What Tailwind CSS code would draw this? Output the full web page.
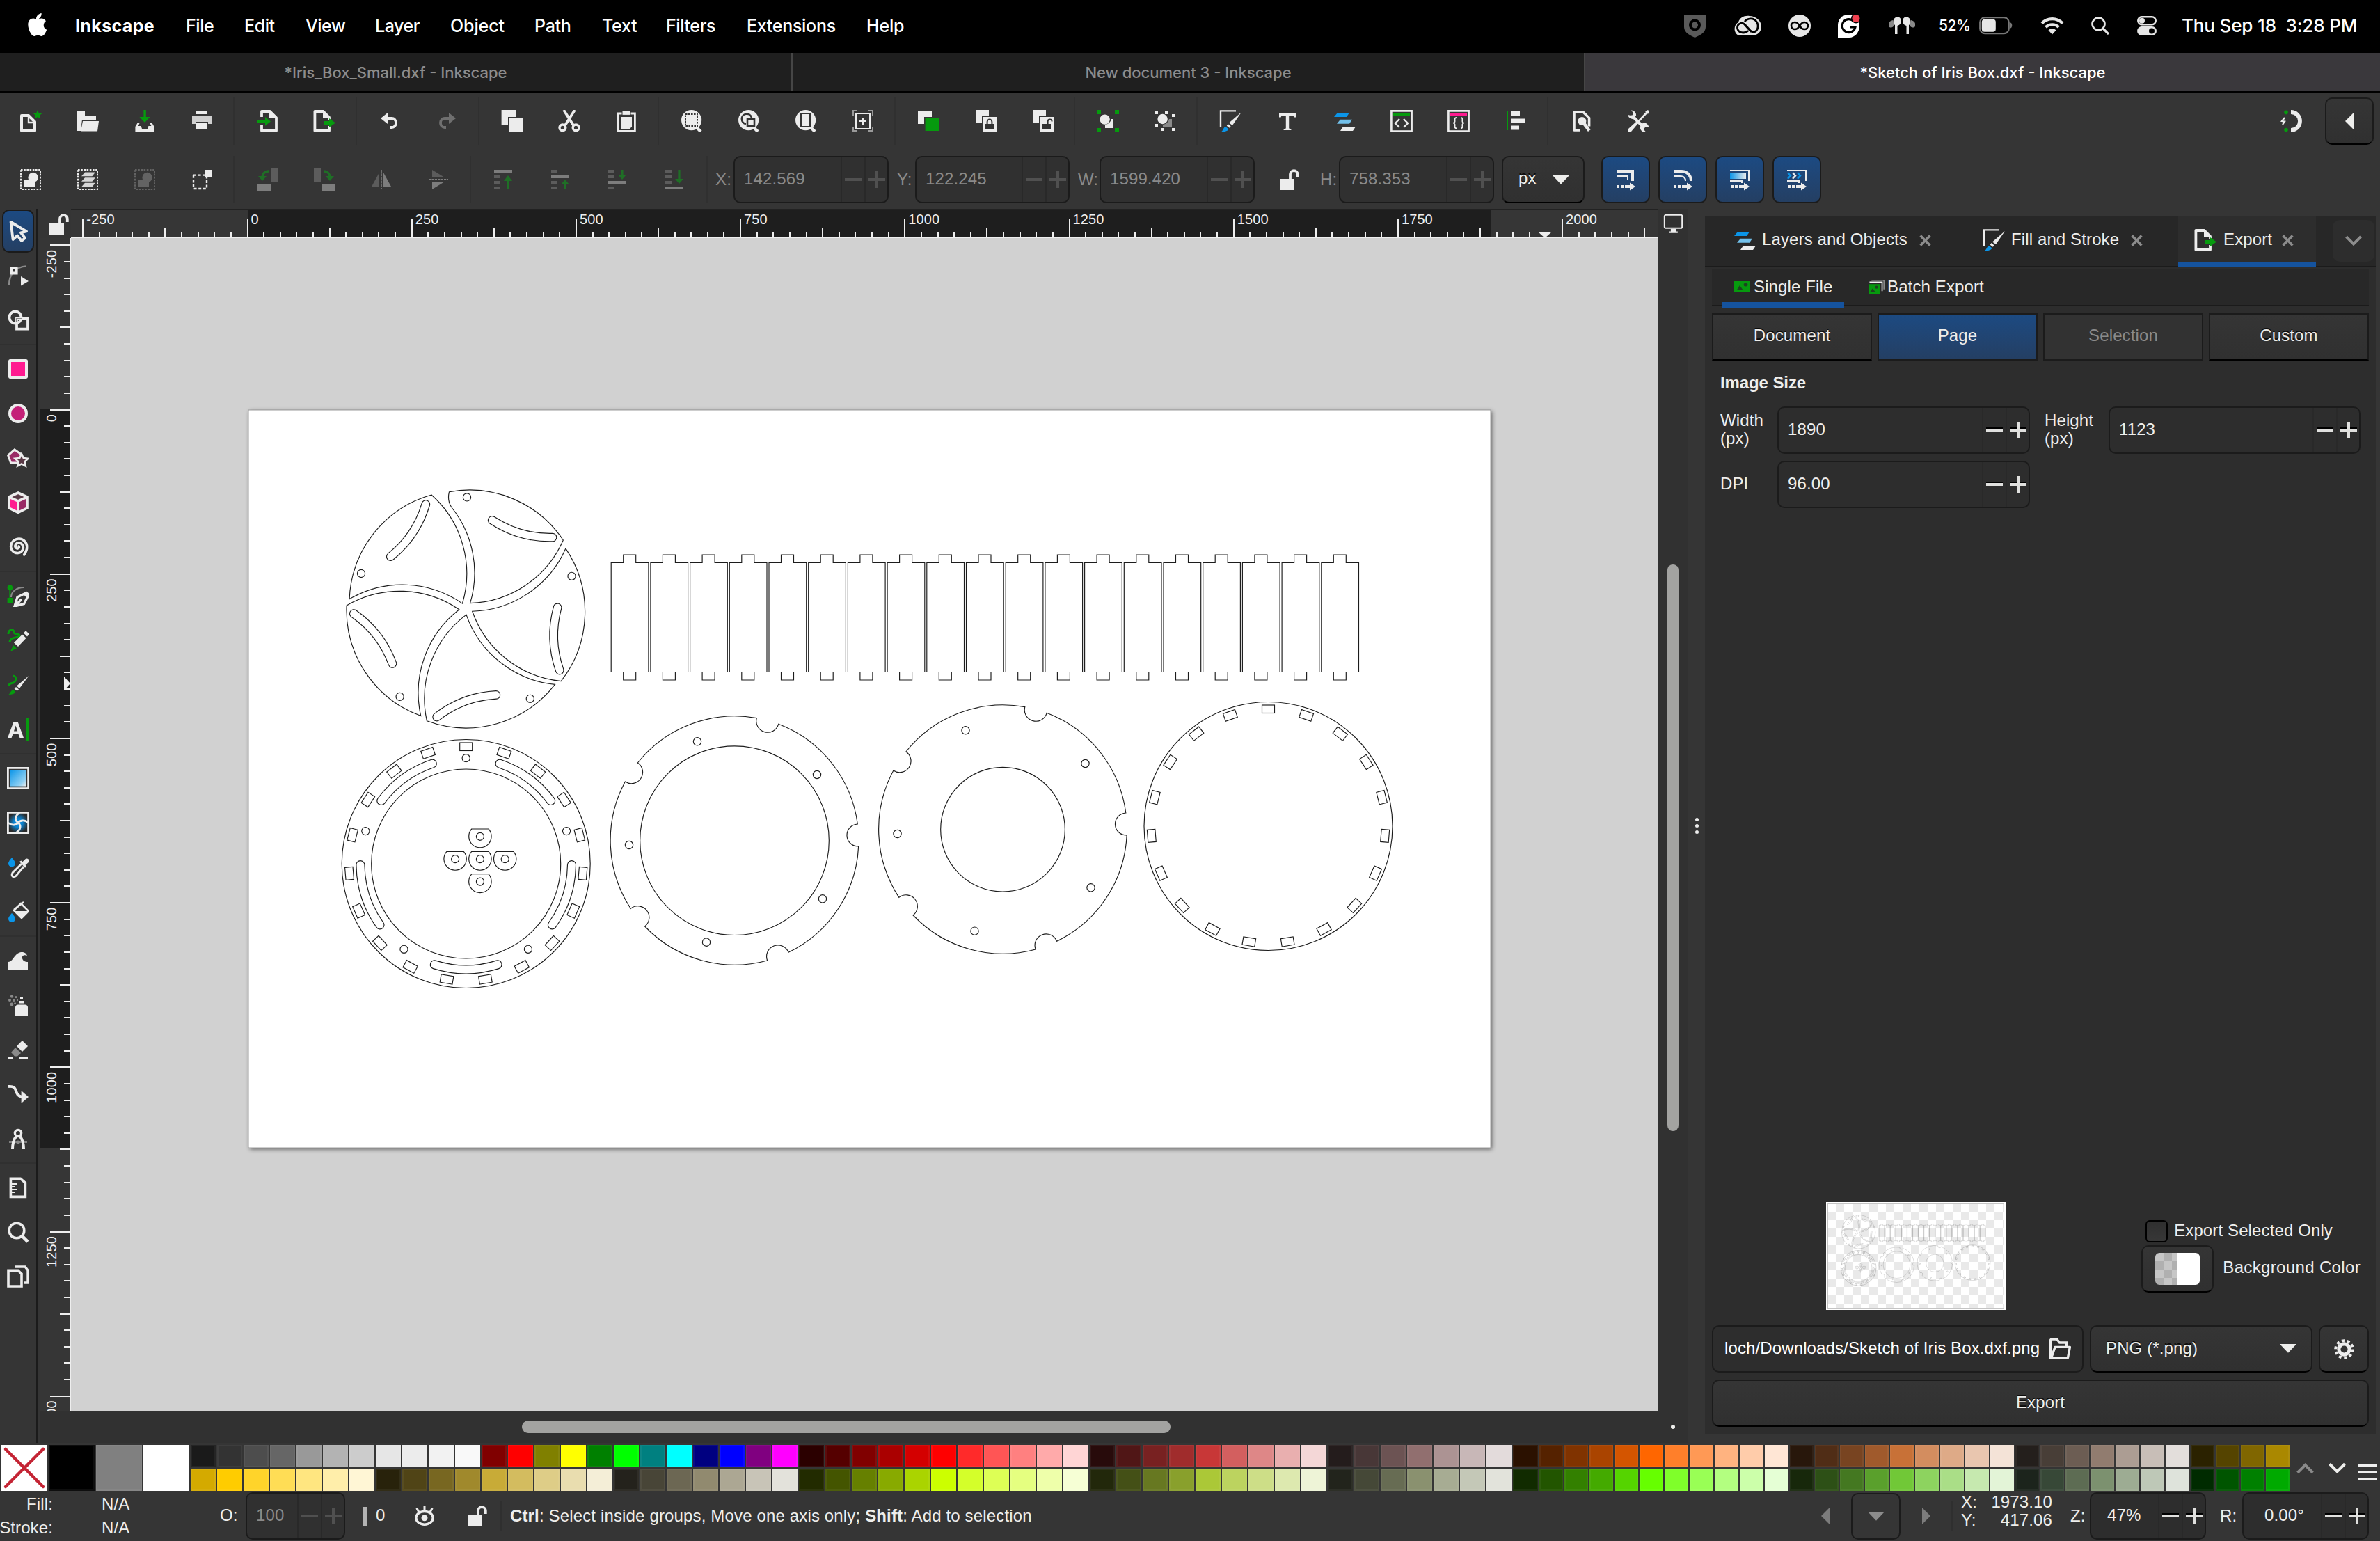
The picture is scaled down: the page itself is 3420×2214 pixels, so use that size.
<!DOCTYPE html>
<html lang="en">
<head>
<meta charset="utf-8">
<title>*Sketch of Iris Box.dxf - Inkscape</title>
<script src="https://cdn.jsdelivr.net/npm/@tailwindcss/browser@4"></script>
</head>
<body class="relative w-[3420px] h-[2214px] overflow-hidden bg-[#353535] text-[#eeeeec] text-[24px] leading-[28px] tracking-[0.12px] font-['Liberation_Sans',Arial,sans-serif] flex flex-col">

<!-- icon sprite -->
<svg class="absolute size-0" xmlns="http://www.w3.org/2000/svg">
 <defs>
  <linearGradient id="gBlue" x1="0" y1="0" x2="1" y2="1"><stop offset="0" stop-color="#0b95e8"/><stop offset=".75" stop-color="#8fd0f3"/><stop offset="1" stop-color="#ececec"/></linearGradient>
  <linearGradient id="gBlueH" x1="0" x2="1"><stop offset="0" stop-color="#0b95e8"/><stop offset="1" stop-color="#ececec"/></linearGradient>
  <radialGradient id="gMesh"><stop offset="0" stop-color="#0b95e8"/><stop offset=".45" stop-color="#0b80cc"/><stop offset="1" stop-color="#2a2a2a"/></radialGradient>
 </defs>
 <symbol id="new" viewBox="0 0 16 16"><path d="M1.500 4h5L11 8.500V15H1.500z" fill="none" stroke="#ececec" stroke-width="2" stroke-linejoin="round"/><path d="M6.500 4.500V9H11" fill="none" stroke="#ececec" stroke-width="1.200"/><path d="M13 0l.9 2.200 2.300.2-1.700 1.500.5 2.300-2-1.200-2 1.200.5-2.300L9.800 2.400l2.300-.2z" fill="#069a0e"/></symbol>
 <symbol id="open" viewBox="0 0 16 16"><path d="M.5 1h5.500v3H14v3H4L3 15H.500z" fill="#ececec"/><path d="M4.500 8H16l-1 7.300H3z" fill="#ececec"/></symbol>
 <symbol id="save" viewBox="0 0 16 16"><path d="M7.200 0h1.700v5H11.800L8 9 4.200 5h3z" fill="#069a0e"/><path d="M3 9L1.200 12v4h13.600v-4L13 9h-1.500l1.200 2.500h-2L10 13.500H6l-.7-2h-2L4.500 9z" fill="#ececec"/></symbol>
 <symbol id="print" viewBox="0 0 16 16"><path d="M4 1h8v2H4z" fill="#ececec"/><path d="M1 4.200h14V10h-2.500V8.500h-9V10H1z" fill="#cfcfcf"/><path d="M4 9.300h8V14H4z" fill="#ececec"/></symbol>
 <symbol id="import" viewBox="0 0 16 16"><path d="M4 5V1h6l4.500 4.500V15H4v-4" fill="none" stroke="#ececec" stroke-width="1.900" stroke-linejoin="round"/><path d="M9.500.5v5.500h5z" fill="#ececec"/><path d="M1 7h5.500V5l4 3.200-4 3.200v-2H1z" fill="#069a0e"/></symbol>
 <symbol id="export" viewBox="0 0 16 16"><path d="M11.500 11.500V15H1.200V1h6l4.300 4.300v1.700" fill="none" stroke="#ececec" stroke-width="1.900" stroke-linejoin="round"/><path d="M7 .5v5.500h5z" fill="#ececec"/><path d="M7.500 8H11.500V6l4.500 3.200-4.500 3.300v-2H7.500z" fill="#069a0e"/></symbol>
 <symbol id="undo" viewBox="0 0 16 16"><path d="M3 6h6.500a3 3 0 0 1 3 3v.5a3 3 0 0 1-3 3H8.500" fill="none" stroke="#ececec" stroke-width="1.900"/><path d="M6.500 2v8L1.500 6z" fill="#ececec"/></symbol>
 <symbol id="redo" viewBox="0 0 16 16"><path d="M13 6H6.500a3 3 0 0 0-3 3v.5a3 3 0 0 0 3 3h1" fill="none" stroke="#6f6f6f" stroke-width="1.900"/><path d="M9.500 2v8l5-4z" fill="#6f6f6f"/></symbol>
 <symbol id="copy" viewBox="0 0 16 16"><path d="M.3 0h10.500v5H5v6H.300z" fill="#ececec"/><path d="M6 6h10v10H6z" fill="#ececec"/></symbol>
 <symbol id="cut" viewBox="0 0 16 16"><path d="M4 0l7 11M12 0L5 11" stroke="#ececec" stroke-width="1.900"/><circle cx="3.200" cy="12.700" r="2.200" fill="none" stroke="#ececec" stroke-width="1.700"/><circle cx="12.800" cy="12.700" r="2.200" fill="none" stroke="#ececec" stroke-width="1.700"/></symbol>
 <symbol id="paste" viewBox="0 0 16 16"><path d="M1.800 2.500h12.400v12.700H1.800z" fill="none" stroke="#ececec" stroke-width="1.400"/><path d="M5 .7h6v3H5z" fill="#ececec" stroke="#353535" stroke-width=".5"/><path d="M4 5h8v7l-2 2H4z" fill="#ececec"/></symbol>
 <symbol id="zoomsel" viewBox="0 0 16 16"><circle cx="7.800" cy="7.300" r="7.300" fill="#ececec"/><path d="M11.500 12.500l3 3" stroke="#ececec" stroke-width="2.200"/><path d="M3.500 3h8.500v8.500H3.500z" fill="none" stroke="#333" stroke-dasharray="1.300 .7"/></symbol>
 <symbol id="zoomdraw" viewBox="0 0 16 16"><circle cx="7.800" cy="7.300" r="7.300" fill="#ececec"/><path d="M11.500 12.500l3 3" stroke="#ececec" stroke-width="2.200"/><path d="M6 10a3.600 3.600 0 1 1 4-4.500M7 6.500h5v5H7z" fill="none" stroke="#333" stroke-width="1.300"/></symbol>
 <symbol id="zoompage" viewBox="0 0 16 16"><circle cx="7.800" cy="7.300" r="7.300" fill="#ececec"/><path d="M11.500 12.500l3 3" stroke="#ececec" stroke-width="2.200"/><path d="M4.500 2.500h6.500v9.500H4.500z" fill="none" stroke="#333" stroke-width="1.100"/></symbol>
 <symbol id="zoomcenter" viewBox="0 0 16 16"><path d="M1 4V.5h3M12 .5h3V4M15 12v3h-3M4 15H1v-3" fill="none" stroke="#9a9a9a"/><path d="M3 2.500h10v11H3z" fill="none" stroke="#ececec"/><path d="M8 5.500v5M5.500 8h5" stroke="#ececec"/></symbol>
 <symbol id="dup" viewBox="0 0 16 16"><path d="M.5 1h10v4H5v5H.500z" fill="#ececec"/><path d="M5.800 6h10v9h-10z" fill="#069a0e"/></symbol>
 <symbol id="clone" viewBox="0 0 16 16"><path d="M1 0h9.500v4H5.500v5H1z" fill="#ececec"/><path d="M6 5h10v11H6z" fill="#ececec"/><path d="M8 10h6v4H8z" fill="#333"/><path d="M9.300 10V8.500a1.700 1.700 0 0 1 3.400 0V10" fill="none" stroke="#333"/></symbol>
 <symbol id="unclone" viewBox="0 0 16 16"><path d="M1 0h9.500v4H5.500v5H1z" fill="#ececec"/><path d="M6 5h10v11H6z" fill="#ececec"/><path d="M8 10h6v4H8z" fill="#333"/><path d="M11.800 10V8.200a1.500 1.500 0 0 1 3 0" fill="none" stroke="#333"/></symbol>
 <symbol id="group" viewBox="0 0 16 16"><path d="M0 0h3v3H0zM13 0h3v3h-3zM0 13h3v3H0zM13 13h3v3h-3z" fill="#069a0e"/><path d="M12 6.500V13H6v-2.500A5 5 0 0 0 10.500 6.500z" fill="#ececec"/><circle cx="5.800" cy="6.800" r="3.600" fill="#ececec"/></symbol>
 <symbol id="ungroup" viewBox="0 0 16 16"><path d="M1 1h2v2H1zM8 1h2v2H8zM13 3h2v2h-2zM1 10h2v2H1zM5 13h2v2H5zM13 13h2v2h-2z" fill="#ececec"/><path d="M13 6.500V12H6.500V10.500A5 5 0 0 0 11 6.500z" fill="#8a8a8a"/><circle cx="6.300" cy="6.500" r="3.600" fill="#ececec"/></symbol>
 <symbol id="fill" viewBox="0 0 16 16"><path d="M1 12V.7h11" fill="none" stroke="#ececec" stroke-width="1.200"/><path d="M16 1.500L9.500 11 7 9.300z" fill="#ececec"/><path d="M6.300 10l2 1.700-.9 1.200-2-1.500z" fill="#ececec"/><path d="M4.500 12l2.300 1.700C6 15.300 4 15.600 1.500 15.600c1.500-.8 1.300-3 3-3.600z" fill="#0b95e8"/></symbol>
 <symbol id="text" viewBox="0 0 16 16"><path d="M2 2h12v3.300h-1.300L12.200 4H9.100v9.300l1.600.3v.9H5.300v-.9l1.600-.3V4H3.800l-.5 1.300H2z" fill="#ececec"/></symbol>
 <symbol id="layers" viewBox="0 0 16 16"><path d="M3 2h8.500L9.500 5H0.500z" fill="#0b95e8"/><path d="M5 6.900h8.500l-2 3H2.500z" fill="#72c0ea"/><path d="M7 12h9l-2 3H5z" fill="#ececec"/></symbol>
 <symbol id="xml" viewBox="0 0 16 16"><path d="M.7.700h14.600v14.600H.700z" fill="none" stroke="#ececec" stroke-width="1.300"/><path d="M2 2h12v2H2z" fill="#069a0e"/><path d="M6.500 6.500L3.500 9.500l3 3M9.500 6.500l3 3-3 3" fill="none" stroke="#ececec" stroke-width="1.200"/></symbol>
 <symbol id="css" viewBox="0 0 16 16"><path d="M.7.700h14.600v14.600H.700z" fill="none" stroke="#ececec" stroke-width="1.300"/><path d="M2 2h12v2H2z" fill="#ff1a90"/><path d="M6.500 5.500c-2 0-1 2-1.300 3-.2.600-1 .8-1 .8s.8.200 1 .9c.3 1-.7 3 1.300 3M9.500 5.500c2 0 1 2 1.300 3 .2.600 1 .8 1 .8s-.8.200-1 .9c-.3 1 .7 3-1.300 3" fill="none" stroke="#ececec"/></symbol>
 <symbol id="align" viewBox="0 0 16 16"><path d="M1.500 1h1v13.500h-1z" fill="#069a0e"/><path d="M4.500 1h6.500v3H4.500zM4.500 6.200H15V9.200H4.500zM4.500 11.300h6V14.300h-6z" fill="#ececec"/></symbol>
 <symbol id="docprops" viewBox="0 0 16 16"><path d="M7 14.500H3V1.500h6.500l4.300 4.300v6" fill="none" stroke="#ececec" stroke-width="1.800" stroke-linejoin="round"/><circle cx="8.700" cy="8" r="3" fill="#ececec"/><path d="M9.200 8.500l4.700 6.300" stroke="#ececec" stroke-width="2.300"/></symbol>
 <symbol id="prefs" viewBox="0 0 16 16"><path d="M4 4.500l8.500 8.500" stroke="#ececec" stroke-width="2.200"/><path d="M.7 3.500A3.300 3.300 0 0 0 5 6.300L6.500 4A3.300 3.300 0 0 0 3 .3l1.600 2-.8 1.500-1.600.1zM15.600 12a3.300 3.300 0 0 0-4.300-2.600L9.500 12a3.300 3.300 0 0 0 4 3.800l-1.700-2 .8-1.500 1.600-.3z" fill="#ececec"/><path d="M14.500 1.500L7 9.500" stroke="#ececec" stroke-width="1.400"/><path d="M7 8l1.300 1.300L3 15.500.800 15.800 1 13.500z" fill="#ececec"/><path d="M13 1l2-1 1 1-1 2z" fill="#ececec"/></symbol>
 <symbol id="snap" viewBox="0 0 16 16"><path d="M8 1.500a6.500 6.500 0 0 1 0 13" fill="none" stroke="#ececec" stroke-width="2.900"/><path d="M3.500 5.500L1.500 8l2 .3-1.500 2.200" fill="none" stroke="#ececec" stroke-width="1.100"/><circle cx="4.500" cy="1.700" r="1.400" fill="#069a0e"/><circle cx="4.500" cy="14.300" r="1.400" fill="#069a0e"/></symbol>
 <!-- selector bar -->
 <symbol id="selall" viewBox="0 0 16 16"><path d="M1 1h14v14H1z" fill="none" stroke="#ececec" stroke-dasharray="1.300 .8"/><path d="M11 8v5H3.500V8.500h4z" fill="#ececec"/><circle cx="9.800" cy="6.500" r="3.600" fill="#ececec"/></symbol>
 <symbol id="sellayers" viewBox="0 0 16 16"><path d="M1 1h14v14H1z" fill="none" stroke="#ececec" stroke-dasharray="1.300 .8"/><path d="M6 2.800h7.500l-2.300 2.800H3.500zM6 6.600h7.500l-2.300 2.800H3.500zM6 10.400h7.500l-2.300 2.800H3.500z" fill="#d6d6d6"/></symbol>
 <symbol id="desel" viewBox="0 0 16 16"><g opacity=".25"><path d="M1 1h14v14H1z" fill="none" stroke="#ececec" stroke-dasharray="1.300 .8"/><path d="M11 8v5H3.500V8.500h4z" fill="#ececec"/><circle cx="9.800" cy="6.500" r="3.600" fill="#ececec"/></g></symbol>
 <symbol id="seltouch" viewBox="0 0 16 16"><path d="M2 4.800h9.500V14.500H2z" fill="none" stroke="#ececec" stroke-width="1.200" stroke-dasharray="2 1.300"/><path d="M10 1h5v5h-5z" fill="#ececec"/></symbol>
 <symbol id="rotl" viewBox="0 0 16 16"><path d="M11 0h5v10h-5z" fill="#5c5c5c"/><path d="M.5 11h10v5H.500z" fill="#7d7d7d"/><path d="M9 2C6 2 4.500 4 4.500 6.500" fill="none" stroke="#1f6f26" stroke-width="1.700"/><path d="M1.500 5.500h6L4.500 9z" fill="#1f6f26"/></symbol>
 <symbol id="rotr" viewBox="0 0 16 16"><path d="M.5 0h5v10H.500z" fill="#5c5c5c"/><path d="M6 11h10v5H6z" fill="#7d7d7d"/><path d="M7.500 2C10.500 2 12 4 12 6.500" fill="none" stroke="#1f6f26" stroke-width="1.700"/><path d="M9 5.500h6L12 9z" fill="#1f6f26"/></symbol>
 <symbol id="fliph" viewBox="0 0 16 16"><path d="M6.500 3v10H1z" fill="#5c5c5c"/><path d="M9.500 3v10H15z" fill="#7d7d7d"/><path d="M8 1v14" stroke="#7d7d7d" stroke-width=".8" stroke-dasharray="2 .6"/></symbol>
 <symbol id="flipv" viewBox="0 0 16 16"><path d="M3.500 1v5.500h9z" fill="#5c5c5c"/><path d="M3.500 15V9.500h9z" fill="#7d7d7d"/><path d="M1 8h14" stroke="#7d7d7d" stroke-width=".9" stroke-dasharray="1.600 .6"/></symbol>
 <symbol id="top" viewBox="0 0 16 16"><path d="M1 1h13v2H1z" fill="#7d7d7d"/><path d="M1 5h4.500v2H1zM1 9h4.500v2H1zM1 13h4.500v2H1z" fill="#5c5c5c"/><path d="M10.200 15V9H8l3-4 3 4h-2.200v6z" fill="#1f6f26"/></symbol>
 <symbol id="raise" viewBox="0 0 16 16"><path d="M1 5h13v2H1z" fill="#7d7d7d"/><path d="M1 1h4.500v2H1zM1 9h4.500v2H1zM1 13h4.500v2H1z" fill="#5c5c5c"/><path d="M10.200 15v-3.500H8l3-3.500 3 3.500h-2.200V15z" fill="#1f6f26"/></symbol>
 <symbol id="lower" viewBox="0 0 16 16"><path d="M1 9h13v2H1z" fill="#7d7d7d"/><path d="M1 1h4.500v2H1zM1 5h4.500v2H1zM1 13h4.500v2H1z" fill="#5c5c5c"/><path d="M10.200 1v3.500H8L11 8l3-3.500h-2.200V1z" fill="#1f6f26"/></symbol>
 <symbol id="bottom" viewBox="0 0 16 16"><path d="M1 13h13v2H1z" fill="#7d7d7d"/><path d="M1 1h4.500v2H1zM1 5h4.500v2H1zM1 9h4.500v2H1z" fill="#5c5c5c"/><path d="M10.200 1v6.500H8l3 3.500 3-3.500h-2.200V1z" fill="#1f6f26"/></symbol>
 <symbol id="unlock" viewBox="0 0 16 16"><path d="M1.500 7.500H12v8H1.500z" fill="#ececec"/><path d="M9 7.500V4.300a2.700 2.700 0 0 1 5.400 0v2.200" fill="none" stroke="#ececec" stroke-width="1.900"/></symbol>
 <symbol id="scstroke" viewBox="0 0 16 16"><path d="M2 1h12v8h-2V3H2z" fill="#ececec"/><path d="M2 5.500h7.500v3" fill="none" stroke="#ececec"/><path d="M1.500 12h2v2h-2zM4.500 12h2v2h-2zM7.500 12H11v-1.800l4 2.800-4 2.800V14H7.500z" fill="#ececec"/></symbol>
 <symbol id="sccorner" viewBox="0 0 16 16"><path d="M2 1h5c4.500 0 8 3 8 8h-2C13 5.500 10.500 3 7 3H2z" fill="#ececec"/><path d="M2 5.500h4c2.500 0 4 1 4 3.500" fill="none" stroke="#ececec"/><path d="M1.500 12h2v2h-2zM4.500 12h2v2h-2zM7.500 12H11v-1.800l4 2.800-4 2.800V14H7.500z" fill="#ececec"/></symbol>
 <symbol id="scgrad" viewBox="0 0 16 16"><path d="M1 1.500h13.500V9" fill="none" stroke="#ececec"/><path d="M1 3h11.500v4.500H1z" fill="url(#gBlueH)"/><path d="M1 9h8.500v1.500" fill="none" stroke="#ececec"/><path d="M1.500 12h2v2h-2zM4.500 12h2v2h-2zM7.500 12H11v-1.800l4 2.800-4 2.800V14H7.500z" fill="#ececec"/></symbol>
 <symbol id="scpat" viewBox="0 0 16 16"><path d="M1 1.500h13.500V9" fill="none" stroke="#ececec"/><path d="M1.500 3l2 2.200-2 2.200M8.500 3l2 2.200-2 2.200" fill="none" stroke="#0b95e8" stroke-width="1.200"/><path d="M5 3l2 2.200L5 7.400" fill="none" stroke="#ececec" stroke-width="1.200"/><path d="M1 9h8.500v1.500" fill="none" stroke="#ececec"/><path d="M1.500 12h2v2h-2zM4.500 12h2v2h-2zM7.500 12H11v-1.800l4 2.800-4 2.800V14H7.500z" fill="#ececec"/></symbol>
 <!-- toolbox -->
 <symbol id="t-select" viewBox="0 0 16 16"><path d="M2.800 1.500L14 8.200l-4 1 3 3.800-2.500 2-3-3.800L4.300 14z" fill="none" stroke="#ececec" stroke-width="1.900" stroke-linejoin="round"/></symbol>
 <symbol id="t-node" viewBox="0 0 16 16"><path d="M1.500 15C1.500 7 6 1.700 14 1.200" fill="none" stroke="#8a8a8a" stroke-width="1.200"/><path d="M3 2.500h3.800v3.800H3z" fill="#353535" stroke="#ececec" stroke-width="2"/><path d="M10 8.500l5.500 3.500-5.500 3.200z" fill="#ececec"/></symbol>
 <symbol id="t-shape" viewBox="0 0 16 16"><circle cx="6" cy="6" r="4.300" fill="none" stroke="#ececec" stroke-width="1.900"/><path d="M7 7h8v7.300H7z" fill="none" stroke="#ececec" stroke-width="1.900"/><path d="M7 9.500V7h3.500" fill="none" stroke="#8a8a8a"/></symbol>
 <symbol id="t-rect" viewBox="0 0 16 16"><rect x="2" y="2" width="12" height="12" rx=".5" fill="#ff1a90" stroke="#ececec" stroke-width="2"/></symbol>
 <symbol id="t-ell" viewBox="0 0 16 16"><circle cx="8" cy="8" r="6" fill="#c42078" stroke="#ececec" stroke-width="2"/></symbol>
 <symbol id="t-star" viewBox="0 0 16 16"><path d="M5.500 2l5 3.500-1.800 6H2.800L.800 6z" fill="#9a2a66" stroke="#ececec" stroke-width="1.500"/><path d="M10.500 5l1.400 3 3.300.4-2.400 2.200.6 3.200-2.900-1.600-2.900 1.600.6-3.200-2.400-2.200 3.300-.4z" fill="#5a3a46" stroke="#ececec" stroke-width="1.300"/></symbol>
 <symbol id="t-cube" viewBox="0 0 16 16"><path d="M8 1l6.500 3v8L8 15.200 1.500 12V4z" fill="#ff1a90"/><path d="M8 7.500v7.500l6.500-3V4.300z" fill="#9a2a66"/><path d="M8 1l6.500 3L8 7 1.500 4z" fill="#5a3a46"/><path d="M1.500 4L8 7l6.500-3M8 7v8M8 1l6.500 3v8L8 15.200 1.500 12V4z" fill="none" stroke="#ececec" stroke-width="1.800"/></symbol>
 <symbol id="t-spiral" viewBox="0 0 16 16"><path d="M8.500 7.500c.8 1-.8 2-1.800 1.200C5 7.200 6.500 5 8.500 5c2.700 0 3.800 3 2.800 5-1.300 2.700-5 3-7 1C1.500 8 3 3.500 6.800 2.300 11 1 15 4.500 14.300 9c-.2 1.800-1 3-2 4.500" fill="none" stroke="#ececec" stroke-width="1.800" stroke-linecap="round"/></symbol>
 <symbol id="t-pen" viewBox="0 0 16 16"><circle cx="2.200" cy="2.200" r="1.900" fill="#069a0e"/><path d="M1.700 3h1v7h-1zM.3 9.500h4v4h-4z" fill="#069a0e"/><path d="M3 9c0-4 4-7 9-7" fill="none" stroke="#8a8a8a"/><path d="M5.500 15.500L7.500 9l5-2.500 2.300 2.300-2.500 5zM10.500 10.500L6 15" fill="none" stroke="#ececec" stroke-width="1.700"/><path d="M12 6l2-1.300 2 1.800-1 2.500z" fill="#ececec"/></symbol>
 <symbol id="t-pencil" viewBox="0 0 16 16"><path d="M1 3.500C1 0 5-.5 5 2S9 2.500 9 4.500 2 5 2 9.500" fill="none" stroke="#069a0e" stroke-width="1.500"/><path d="M13.500 1L16 3.500l-1.500 1.800L12 2.700zM11 3.700l2.800 2.700L8 12.500 5 9.700z" fill="#ececec"/><path d="M4.500 11.500l2.500 2.300L2.500 16z" fill="#069a0e"/></symbol>
 <symbol id="t-callig" viewBox="0 0 16 16"><path d="M4 1.500c4 0 2.500 5-.5 5.300C2 7 1.500 8 1.500 8.500" fill="none" stroke="#069a0e" stroke-width="1.500"/><path d="M15.700 1.500L9 10.500 7 8.700zM6.500 9.500l2 1.700-1.200 1.200-2-1.600z" fill="#ececec"/><path d="M4.500 11.500l1.700 1.500c-.8 1.500-2.500 2-5 2 1.200-.8 1.500-3 3.300-3.500z" fill="#069a0e"/></symbol>
 <symbol id="t-text" viewBox="0 0 16 16"><path d="M4.800 2.500h3L12 14H9.200l-.9-2.500H4.200L3.300 14H.500zM5 9.300h2.600L6.300 5.300z" fill="#ececec"/><path d="M14 0h2v16h-2z" fill="#069a0e"/></symbol>
 <symbol id="t-grad" viewBox="0 0 16 16"><path d="M.7.700h14.600v14.600H.700z" fill="none" stroke="#ececec" stroke-width="1.400"/><path d="M2.200 2.200h11.600v11.600H2.200z" fill="url(#gBlue)"/></symbol>
 <symbol id="t-mesh" viewBox="0 0 16 16"><path d="M.7.700h14.600v14.600H.700z" fill="url(#gMesh)" stroke="#ececec" stroke-width="1.400"/><path d="M.7 8C4 10.500 7 9.500 8 8s4.500-2.500 7.300 0M8 8C5 6 6 3 9 .7M8 8c2.500 2 2 5-1.500 7.300" fill="none" stroke="#ececec" stroke-width="1.400"/></symbol>
 <symbol id="t-drop" viewBox="0 0 16 16"><path d="M3.500 1S6 3.800 6 5.200a2.500 2.500 0 0 1-5 0C1 3.800 3.500 1 3.500 1z" fill="#0b95e8"/><path d="M10.500 5.500L4 12c-.5.800-.7 2 0 2.500s1.700.3 2.500-.3L12 7.500" fill="none" stroke="#ececec" stroke-width="1.400"/><path d="M9 4l1.200-.7 1 .8 2-2c1.500-1 3.500.7 2.400 2.300l-2.300 2 .7 1-1 1z" fill="#ececec"/></symbol>
 <symbol id="t-bucket" viewBox="0 0 16 16"><path d="M3.500 9S6 11.500 6 13a2.500 2.500 0 0 1-5 0c0-1.500 2.500-4 2.500-4z" fill="#0b95e8"/><path d="M10 2l5.500 5.500-5 5L5 7z" fill="none" stroke="#ececec" stroke-width="1.300"/><path d="M6 7.500h9.500l-5 5z" fill="#ececec"/><path d="M12 1L5 6.500" stroke="#ececec" stroke-width="1.200"/></symbol>
 <symbol id="t-tweak" viewBox="0 0 16 16"><path d="M1 14.500V9c3.500 0 4-6 9-7 2-.3 4 .7 4.500 2.500-2-1-4 0-3.500 2S13.500 9 15 9v5.500z" fill="#ececec"/></symbol>
 <symbol id="t-spray" viewBox="0 0 16 16"><path d="M6 9.500c0-1 1-1.700 2-1.700h5c1 0 2 .7 2 1.700v6H6zM8.500 5h4v1.700h-4zM9.500 2.500h2V4h-2z" fill="#ececec"/><g fill="#8a8a8a"><circle cx="3.500" cy="1.800" r="1.100"/><circle cx="6.500" cy="2.300" r=".8"/><circle cx="2" cy="4.500" r="1"/><circle cx="5" cy="4.500" r="1"/><circle cx="7.500" cy="4.500" r=".6"/><circle cx="3.500" cy="7.500" r="1.200"/><circle cx="5.800" cy="6.800" r=".7"/></g></symbol>
 <symbol id="t-erase" viewBox="0 0 16 16"><path d="M11 1.500L15 5.500 11 9.500 7 5.500z" fill="#ececec"/><path d="M6 6.500l4 4-2.500 2.300H5.500L3 10z" fill="#8a8a8a"/><path d="M1 14h3M9 14h6" stroke="#ececec" stroke-width="1.700"/></symbol>
 <symbol id="t-conn" viewBox="0 0 16 16"><path d="M1 2.500c5-.5 5 2 6 4.500.8 2 2 3 5 3" fill="none" stroke="#ececec" stroke-width="2"/><path d="M10.300 5.500L15.500 10l-5.200 4.500z" fill="#ececec"/></symbol>
 <symbol id="t-lpe" viewBox="0 0 16 16"><path d="M1.500 10.500h13" stroke="#8a8a8a" stroke-width=".9"/><circle cx="8" cy="4" r="2.300" fill="none" stroke="#ececec" stroke-width="1.700"/><path d="M6.800 6C4.800 8.500 4 12 4 15.500M9.200 6c2 2.500 2.800 6 2.800 9.500" fill="none" stroke="#ececec" stroke-width="2"/><circle cx="8" cy="10.500" r="1.300" fill="#8a8a8a"/></symbol>
 <symbol id="t-measure" viewBox="0 0 16 16"><path d="M2.700 1.700h7l3.500 3v10h-10.500z" fill="none" stroke="#ececec" stroke-width="1.800"/><path d="M3.500 5.500h4M3.500 7.500h2.500M3.500 9.500h4M3.500 11.500h2.500" stroke="#ececec" stroke-width="1"/></symbol>
 <symbol id="t-zoom" viewBox="0 0 16 16"><circle cx="7" cy="7" r="5.400" fill="none" stroke="#ececec" stroke-width="1.800"/><path d="M11 11l4 4" stroke="#ececec" stroke-width="2.300"/></symbol>
 <symbol id="t-pages" viewBox="0 0 16 16"><path d="M5.500 1H13l2 2.500V12.500h-2.500" fill="none" stroke="#ececec" stroke-width="1.700"/><path d="M1 3.700h7L10.500 6v9H1z" fill="none" stroke="#ececec" stroke-width="1.800"/></symbol>
 <!-- misc -->
 <symbol id="close" viewBox="0 0 16 16"><path d="M1.500 1.500l13 13M14.500 1.500l-13 13" stroke="#8c8c8c" stroke-width="3.400"/></symbol>
 <symbol id="monitor" viewBox="0 0 16 16"><rect x="1" y="1" width="14" height="10.500" rx="1" fill="none" stroke="#ececec" stroke-width="1.100"/><path d="M6 12h4v2h1.500v1.300h-7V14H6z" fill="#ececec"/></symbol>
 <symbol id="picture" viewBox="0 0 16 16" preserveAspectRatio="none"><path d="M0 0h16v16H0z" fill="#069a0e"/><path d="M2.500 13l3-7 3.500 7z" fill="#1d4420"/><ellipse cx="11.500" cy="5" rx="2" ry="2.500" fill="#1d4420"/></symbol>
 <symbol id="pictures" viewBox="0 0 16 16" preserveAspectRatio="none"><path d="M3 .6h12.400V11" fill="none" stroke="#999" stroke-width="1"/><path d="M1 2.600h12.600V13" fill="none" stroke="#eee" stroke-width="1.200"/><path d="M0 5h11.500v11H0z" fill="#069a0e"/><path d="M1.500 14l2.500-4 3 4z" fill="#1d4420"/><circle cx="8" cy="8.500" r="1.700" fill="#1d4420"/></symbol>
 <symbol id="folder" viewBox="0 0 16 16"><path d="M2.500 14.500H1.200V2.200C1.200 1.500 1.600 1 2.300 1h3.500l2 2.500h5V6" fill="none" stroke="#ececec" stroke-width="1.700"/><path d="M4.500 6.700h10.700l-1.500 7.800H1.800z" fill="none" stroke="#ececec" stroke-width="1.700" stroke-linejoin="round"/></symbol>
 <symbol id="gear" viewBox="0 0 16 16"><circle cx="8" cy="8" r="4.200" fill="none" stroke="#ececec" stroke-width="2.800"/><circle cx="8" cy="8" r="6.800" fill="none" stroke="#ececec" stroke-width="2.200" stroke-dasharray="2.200 2.070"/></symbol>
 <symbol id="tri-l" viewBox="0 0 16 16"><path d="M12 0v16L4 8z" fill="currentColor"/></symbol>
 <symbol id="tri-r" viewBox="0 0 16 16"><path d="M4 0v16l8-8z" fill="currentColor"/></symbol>
 <symbol id="tri-d" viewBox="0 0 16 16"><path d="M0 4h16l-8 8.500z" fill="currentColor"/></symbol>
 <symbol id="chev-d" viewBox="0 0 16 16"><path d="M1 4l7 7 7-7" fill="none" stroke="currentColor" stroke-width="2.600"/></symbol>
 <symbol id="chev-u" viewBox="0 0 16 16"><path d="M1 12l7-7 7 7" fill="none" stroke="currentColor" stroke-width="2.600"/></symbol>
 <symbol id="eye" viewBox="0 0 16 16"><ellipse cx="8" cy="9.500" rx="6.500" ry="5" fill="none" stroke="#ececec" stroke-width="1.900"/><circle cx="8" cy="9.500" r="2.400" fill="#ececec"/><path d="M8 0v5M2 2l2 3.500M14 2l-2 3.500" stroke="#ececec" stroke-width="1.600"/></symbol>
</svg>

<!-- macOS menu bar -->
<header class="h-[76px] shrink-0 bg-black text-white flex items-center font-['Inter',sans-serif] text-[25px] leading-[30px] pb-[2px]">
 <svg class="ml-[40px] w-[28px] h-[33px] shrink-0 mb-[4px]" viewBox="0 0 170 200"><path fill="#fff" d="M119 0c2 16-5 30-13 39-8 10-21 17-33 16-2-15 5-30 13-38C95 8 108 1 119 0zM158 68c-12 8-20 20-20 37 0 19 11 33 27 39-4 13-10 25-18 37-9 13-18 19-28 19-12 0-16-7-31-7s-20 7-31 7c-11 0-20-8-29-21C12 155 2 125 2 100c0-36 22-54 45-54 14 0 25 8 34 8 8 0 22-9 38-9 15 1 29 8 39 23z"/></svg>
 <nav class="flex items-center w-[1240px] ml-[40px] whitespace-nowrap">
  <span class="w-[159px] font-bold tracking-[0.35px]">Inkscape</span>
  <span class="w-[84px] font-medium tracking-[-0.45px]">File</span>
  <span class="w-[88px] font-medium tracking-[-0.45px]">Edit</span>
  <span class="w-[100px] font-medium tracking-[-0.45px]">View</span>
  <span class="w-[108px] font-medium tracking-[-0.45px]">Layer</span>
  <span class="w-[121px] font-medium tracking-[-0.1px]">Object</span>
  <span class="w-[97px] font-medium tracking-[-0.3px]">Path</span>
  <span class="w-[92px] font-medium tracking-[-0.3px]">Text</span>
  <span class="w-[116px] font-medium tracking-[-0.4px]">Filters</span>
  <span class="w-[172px] font-medium tracking-[-0.3px]">Extensions</span>
  <span class="font-medium tracking-[-0.2px]">Help</span>
 </nav>
 <div class="flex-1"></div>
 <div class="flex items-center w-[1000px] shrink-0">
  <svg class="w-[31px] h-[33px]" viewBox="0 0 31 33"><path d="M0 0h31v18c0 8-9 12-15.500 15C9 30 0 26 0 18z" fill="#5a5a5a"/><circle cx="15.500" cy="15" r="6.500" fill="none" stroke="#000" stroke-width="4"/></svg>
  <svg class="ml-[41px] w-[39px] h-[30px]" viewBox="0 0 39 30"><path d="M8 29C-1 28-2 14 6 10 8 3 15 0 22 1c9 0 17 7 17 15 0 8-6 13-13 13z" fill="#e6e6e6"/><path d="M20 22c-4 4-11 4-14 0s-1-9 2-10c4-2 6 0 8 2l9 10M15 9c4-5 13-6 17 0s2 14-4 15c-3 0-5-2-7-4l-7-8" fill="none" stroke="#000" stroke-width="2.800"/></svg>
  <svg class="ml-[39px] w-[32px] h-[32px]" viewBox="0 0 32 32"><circle cx="16" cy="16" r="16" fill="#e6e6e6"/><path d="M16 16c-3-5-5-5-7-5a5 5 0 0 0 0 10c2 0 4 0 7-5s5-5 7-5a5 5 0 0 1 0 10c-2 0-4 0-7-5z" fill="none" stroke="#000" stroke-width="2.600"/></svg>
  <svg class="ml-[39px] w-[32px] h-[33px]" viewBox="0 0 32 33"><path d="M0 33V15C0 6 7 0 16 0s15 7 15 16-6 17-15 17z" fill="#fff"/><path d="M23 10a9.500 9.500 0 1 0 2 8h-7" fill="none" stroke="#000" stroke-width="3.200"/><circle cx="26" cy="5.500" r="7" fill="#000"/><circle cx="26" cy="5.500" r="5.500" fill="#f0404f"/></svg>
  <svg class="ml-[41px] w-[38px] h-[26px]" viewBox="0 0 38 26"><path d="M10 1c4-2 8 1 8 5 0 3-2 6-5.500 7v12h-3.500V12C6 10 5 4 10 1zM28 1c-4-2-8 1-8 5 0 3 2 6 5.500 7v12h3.500V12c3-2 4-8-1-11z" fill="#e6e6e6"/><path d="M6 5c-5 1-7 4-6 9 3 3 7 1 8-2zM32 5c5 1 7 4 6 9-3 3-7 1-8-2z" fill="#8a8a8a"/></svg>
  <span class="ml-[34px] w-[58px] text-[21px] font-medium tracking-[-0.5px]">52%</span>
  <svg class="w-[48px] h-[26px]" viewBox="0 0 48 26"><rect x="1.200" y="1.200" width="41.500" height="23" rx="7" fill="none" stroke="#777" stroke-width="2.200"/><rect x="3.800" y="3.800" width="20" height="18" rx="4" fill="#e6e6e6"/><path d="M45 8.500c3 1 3 7 0 8z" fill="#777"/></svg>
  <svg class="ml-[40px] w-[34px] h-[26px]" viewBox="0 0 34 26"><path d="M2 9.500C10.500 1 23.500 1 32 9.500M7.500 15c5.500-5 13.500-5 19 0" fill="none" stroke="#e6e6e6" stroke-width="4.200"/><path d="M17 25.500l-5.500-6c3-3 8-3 11 0z" fill="#e6e6e6"/></svg>
  <svg class="ml-[39px] w-[26px] h-[26px]" viewBox="0 0 26 26"><circle cx="10.500" cy="10.500" r="9" fill="none" stroke="#e6e6e6" stroke-width="2.800"/><path d="M17 17l8 8" stroke="#e6e6e6" stroke-width="3.200"/></svg>
  <svg class="ml-[40px] w-[28px] h-[28px]" viewBox="0 0 28 28"><rect x="1.200" y="1.200" width="25.600" height="11" rx="5.500" fill="none" stroke="#e6e6e6" stroke-width="2.400"/><circle cx="7" cy="6.700" r="4" fill="#e6e6e6"/><rect y="15" width="28" height="13" rx="6.500" fill="#e6e6e6"/><circle cx="21" cy="21.500" r="4" fill="#000"/></svg>
  <span class="ml-[36px] text-[26px] font-medium tracking-[-0.15px] whitespace-nowrap">Thu Sep 18&nbsp; 3:28 PM</span>
 </div>
</header>

<!-- window tabs -->
<div class="h-[57px] shrink-0 grid grid-cols-[1139px_1139px_1142px] border-b-2 border-black bg-[#1f1f1f] font-['Inter',sans-serif] text-[22px] text-[#8c8c8c] text-center leading-[57px] font-medium tracking-[0px] overflow-hidden">
 <div class="border-r-2 border-[#464646]">*Iris_Box_Small.dxf - Inkscape</div>
 <div class="border-r-2 border-[#464646]">New document 3 - Inkscape</div>
 <div class="bg-[#3a383c] text-white">*Sketch of Iris Box.dxf - Inkscape</div>
</div>

<!-- command bar -->
<div id="cmdbar" class="h-[82px] shrink-0 flex items-center pl-[2px] pr-[9px]"></div>

<!-- selector controls -->
<div class="h-[85px] shrink-0 flex items-center pl-[2px] text-[#8a8a8a]">
 <div id="selbar" class="flex items-center"></div>
 <span class="w-[32px] pl-[6px]">X:</span><div data-spin="142.569" data-off="1" class="w-[223px]"></div>
 <span class="w-[38px] pl-[12px]">Y:</span><div data-spin="122.245" data-off="1" class="w-[222px]"></div>
 <span class="w-[43px] pl-[12px]">W:</span><div data-spin="1599.420" data-off="1" class="w-[223px]"></div>
 <span class="w-[94px] flex justify-center pl-[3px]"><svg class="size-8"><use href="#unlock"/></svg></span>
 <span class="w-[27px]">H:</span><div data-spin="758.353" data-off="1" class="w-[223px]"></div>
 <div class="ml-[11px] w-[119px] h-[68px] rounded-[10px] border-2 border-[#1b1b1b] border-b-black bg-linear-to-b from-[#353535] to-[#303030] text-[#eeeeec] flex items-center justify-between pl-[22px] pr-[20px] [text-shadow:0_-2px_#000000cc]"><span class="-mt-[4px]">px</span><svg class="size-[24px]"><use href="#tri-d"/></svg></div>
 <div id="scalebar" class="ml-[24px] flex gap-[12px]"></div>
</div>

<!-- main area -->
<div class="h-[1773px] shrink-0 flex">
 <div id="toolbox" class="w-[54px] border-r-2 border-[#1b1b1b] flex flex-col"></div>
 <div class="w-[4px]"></div>
 <div class="w-[2324px] grid grid-cols-[44px_2280px] grid-rows-[42px_1685px_46px]">
  <div class="pl-[10px] pt-[6px]"><svg class="size-8"><use href="#unlock"/></svg></div>
  <svg id="hruler" class="w-[2280px] h-[42px]" viewBox="102 300 2280 42"></svg>
  <svg id="vruler" class="w-[44px] h-[1685px]" viewBox="58 342 44 1685"></svg>
  <svg id="canvas" class="w-[2280px] h-[1685px] bg-[#d1d1d1]" viewBox="102 342 2280 1685">
   <defs><filter id="soft" x="-5%" y="-5%" width="110%" height="110%"><feGaussianBlur stdDeviation="3"/></filter></defs>
   <rect x="359" y="591" width="1785" height="1060" fill="#000" opacity=".55" filter="url(#soft)"/>
   <rect x="357" y="589" width="1785" height="1060" fill="#fff" stroke="#9c9c9c"/>
   <g id="drawing" fill="none" stroke="#1c1c1c" stroke-width="1.150"></g>
  </svg>
  <div class="col-span-2 bg-[#313131] pt-[14px] pl-[692px]"><div class="w-[932px] h-[18px] rounded-full bg-[#a3a3a1]"></div></div>
 </div>
 <div class="w-[44px] bg-[#313131] flex flex-col items-center">
  <svg class="mt-[7px] size-[29px]"><use href="#monitor"/></svg>
  <div class="mt-[475px] w-[16px] h-[814px] rounded-full bg-[#a3a3a1]"></div>
  <div class="mt-[422px] size-[6px] rounded-full bg-[#eeeeec]"></div>
 </div>
 <div class="w-[24px] flex flex-col items-center justify-center gap-[4px]">
  <i class="size-[5px] rounded-full bg-[#eee]"></i><i class="size-[5px] rounded-full bg-[#eee]"></i><i class="size-[5px] rounded-full bg-[#eee]"></i>
 </div>
 <!-- export dialog -->
 <aside class="w-[964px] mt-[10px] h-[1750px] bg-[#2d2d2d] flex flex-col">
  <div class="h-[74px] shrink-0 bg-[#272727] border-b-2 border-[#1b1b1b] flex items-start">
   <div class="w-[357px] h-[72px] flex items-center pl-[41px] pb-[2px]"><svg class="size-8 mr-[9px]"><use href="#layers"/></svg><span class="w-[226px] pb-[2px]">Layers and Objects</span><svg class="size-[17px]"><use href="#close"/></svg></div>
   <div class="w-[323px] h-[72px] flex items-center pl-[42px] pb-[2px]"><svg class="size-8 mr-[9px]"><use href="#fill"/></svg><span class="w-[172px] pb-[2px]">Fill and Stroke</span><svg class="size-[17px]"><use href="#close"/></svg></div>
   <div class="w-[198px] h-[74px] flex items-center pl-[23px] bg-[#2d2d2d] border-b-8 border-[#15539e] pt-[4px]"><svg class="size-8 mr-[10px]"><use href="#export"/></svg><span class="w-[84px] pb-[2px]">Export</span><svg class="size-[17px]"><use href="#close"/></svg></div>
   <div class="ml-[24px] mt-[6px] w-[60px] h-[60px] rounded-[10px] bg-[#2d2d2d] text-[#8c8c8c] flex items-center justify-center"><svg class="size-[24px]"><use href="#chev-d"/></svg></div>
  </div>
  <div class="mx-[10px] mt-[2px] h-[54px] shrink-0 bg-[#282828] border-b-2 border-[#1b1b1b] flex pl-[14px]">
   <div class="w-[176px] h-[56px] border-b-8 border-[#15539e] flex items-center pl-[18px] pt-[4px] whitespace-nowrap"><svg class="w-[23px] h-[16px] mr-[5px] shrink-0"><use href="#picture"/></svg>Single File</div>
   <div class="flex items-center pl-[35px] h-[52px]"><svg class="w-[23px] h-[20px] mr-[4px]"><use href="#pictures"/></svg>Batch Export</div>
  </div>
  <div class="mx-[10px] mt-[10px] grid grid-cols-4 gap-[8px] h-[68px] shrink-0 text-center leading-[60px]">
   <div class="border-2 border-[#1b1b1b] border-b-black bg-linear-to-b from-[#353535] to-[#303030] [text-shadow:0_-2px_#000000cc]">Document</div>
   <div class="border-2 border-[#1b1b1b] bg-linear-to-b from-[#1c4a82] to-[#243f63]">Page</div>
   <div class="border-2 border-[#1b1b1b] bg-[#323232] text-[#8a8a8a]">Selection</div>
   <div class="border-2 border-[#1b1b1b] border-b-black bg-linear-to-b from-[#353535] to-[#303030] [text-shadow:0_-2px_#000000cc]">Custom</div>
  </div>
  <div class="ml-[22px] mt-[18px] font-bold tracking-[-0.1px]">Image Size</div>
  <div class="ml-[22px] mt-[20px] flex items-center">
   <span class="w-[82px] leading-[26px] -mt-[2px]">Width<br>(px)</span><div data-spin="1890" class="w-[363px]"></div>
   <span class="ml-[21px] w-[92px] leading-[26px] -mt-[2px]">Height<br>(px)</span><div data-spin="1123" class="w-[362px]"></div>
  </div>
  <div class="ml-[22px] mt-[10px] flex items-center"><span class="w-[82px] -mt-[2px]">DPI</span><div data-spin="96.00" class="w-[363px]"></div></div>
  <div class="flex-1"></div>
  <div class="ml-[174px] mr-[22px] flex items-start h-[155px]">
   <div class="w-[258px] h-[155px] border-2 border-white bg-[#fff] bg-[repeating-conic-gradient(#e9e9e9_0_25%,#ffffff_0_50%)] bg-size-[24px_24px]">
    <svg id="thumb" class="w-[254px] h-[151px] outline-1 -outline-offset-1 outline-[#c4c4c4]" viewBox="356 588 1786 1062" fill="none" stroke="#000" stroke-opacity=".16"></svg>
   </div>
   <div class="flex-1 flex flex-col items-end pt-[26px]">
    <div class="flex items-center mr-[40px]"><i class="size-[32px] rounded-[6px] border-2 border-black bg-linear-to-b from-[#2f2f2f] to-[#373737] mr-[9px]"></i><span class="mb-[2px]">Export Selected Only</span></div>
    <div class="flex items-center mt-[4px]"><div class="w-[104px] h-[68px] mr-[13px] rounded-[10px] border-2 border-[#1b1b1b] border-b-black bg-linear-to-b from-[#353535] to-[#303030] flex items-center justify-center"><div class="w-[64px] h-[46px] rounded-[6px] overflow-hidden flex"><div class="w-1/2 bg-[repeating-conic-gradient(#b0b0b0_0_25%,#c6c6c6_0_50%)] bg-size-[24px_24px]"></div><div class="w-1/2 bg-white"></div></div></div><span class="mb-[4px] tracking-[0.35px]">Background Color</span></div>
   </div>
  </div>
  <div class="mx-[10px] mt-[22px] flex gap-[9px] h-[68px] shrink-0">
   <div class="w-[534px] rounded-[10px] border-2 border-[#1b1b1b] flex items-center pl-[16px] pb-[3px] whitespace-nowrap"><span class="w-[466px] text-white">loch/Downloads/Sketch of Iris Box.dxf.png</span><svg class="size-[32px] mt-[3px]"><use href="#folder"/></svg></div>
   <div class="w-[320px] rounded-[10px] border-2 border-[#1b1b1b] border-b-black bg-linear-to-b from-[#353535] to-[#303030] flex items-center justify-between pl-[21px] pr-[21px] pb-[2px] [text-shadow:0_-2px_#000000cc]">PNG (*.png)<svg class="size-[24px]"><use href="#tri-d"/></svg></div>
   <div class="w-[72px] rounded-[10px] border-2 border-[#1b1b1b] border-b-black bg-linear-to-b from-[#353535] to-[#303030] flex items-center justify-center"><svg class="size-[29px]"><use href="#gear"/></svg></div>
  </div>
  <div class="mx-[10px] mt-[10px] mb-[10px] h-[68px] shrink-0 rounded-[10px] border-2 border-[#1b1b1b] border-b-black bg-linear-to-b from-[#353535] to-[#303030] text-center leading-[61px] [text-shadow:0_-2px_#000000cc]">Export</div>
 </aside>
</div>

<!-- palette -->
<div class="h-[69px] shrink-0 flex pt-[3px] pl-[2px]">
 <div class="grid grid-cols-4 gap-[2px] w-[270px] h-[66px] mr-[2px] shrink-0">
  <svg class="bg-white w-[66px] h-[66px]" viewBox="0 0 66 66"><path d="M6 6l54 54M60 6L6 60" stroke="#c42434" stroke-width="4.500" stroke-linecap="round"/></svg>
  <div class="bg-black border-2 border-[#0e0e0e]"></div><div class="bg-[#808080] border-2 border-[#868686]"></div><div class="bg-white"></div>
 </div>
 <div id="swatches" class="w-[3018px] shrink-0 grid grid-cols-[repeat(51,38px)_repeat(30,36px)] grid-rows-2 gap-y-[2px] h-[66px]"></div>
 <div class="flex items-center pl-[8px]"><svg class="size-[25px] text-[#8a8a8a]"><use href="#chev-u"/></svg><svg class="ml-[21px] size-[25px] text-[#eeeeec]"><use href="#chev-d"/></svg>
 <div class="ml-[17px] mt-[12px] flex flex-col gap-[6px]"><i class="w-[28px] h-[4px] bg-[#eee]"></i><i class="w-[28px] h-[4px] bg-[#eee]"></i><i class="w-[28px] h-[4px] bg-[#eee]"></i></div></div>
</div>

<!-- status bar -->
<footer class="h-[72px] shrink-0 flex items-center whitespace-nowrap">
 <div class="w-[76px] text-right leading-[34px] flex flex-col items-end"><span>Fill:</span><span>Stroke:</span></div>
 <div class="w-[240px] pl-[70px] leading-[34px]">N/A<br>N/A</div>
 <span class="w-[37px] mb-[2px]">O:</span><div data-spin="100" data-off="1" class="w-[143px] text-[#8a8a8a]"></div>
 <i class="ml-[26px] w-[5px] h-[27px] bg-[#b3b3b3]"></i><span class="ml-[13px] w-[55px] mb-[2px]">0</span>
 <svg class="size-[30px]"><use href="#eye"/></svg>
 <svg class="ml-[44px] size-[32px]"><use href="#unlock"/></svg>
 <i class="ml-[18px] w-[2px] h-[44px] bg-[#2f2f2f]"></i>
 <span class="ml-[12px] tracking-[0.15px]"><b>Ctrl</b>: Select inside groups, Move one axis only; <b>Shift</b>: Add to selection</span>
 <div class="flex-1"></div>
 <svg class="size-[24px] text-[#7c7c7c]"><use href="#tri-l"/></svg>
 <div class="ml-[25px] w-[71px] h-[67px] rounded-[10px] border-2 border-[#1b1b1b] text-[#8c8c8c] flex items-center justify-center"><svg class="size-[24px]"><use href="#tri-d"/></svg></div>
 <svg class="ml-[25px] size-[24px] text-[#7c7c7c]"><use href="#tri-r"/></svg>
 <i class="ml-[24px] w-[2px] h-[44px] bg-[#2f2f2f]"></i>
 <div class="ml-[12px] w-[30px] leading-[26px] mb-[14px]">X:<br>Y:</div><div class="w-[101px] text-right leading-[26px] mb-[14px]">1973.10<br>417.06</div>
 <span class="ml-[26px] w-[28px]">Z:</span><div data-spin="47%" data-pad="1" class="w-[167px]"></div>
 <span class="ml-[20px] w-[32px]">R:</span><div data-spin="0.00°" data-pad="2" class="w-[182px] mr-[16px]"></div>
</footer>

<script>
const $ = id => document.getElementById(id);
const icon = (n, c = 'size-8') => `<svg class="${c}"><use href="#${n}"/></svg>`;

/* spin buttons */
document.querySelectorAll('[data-spin]').forEach(el => {
  const off = el.dataset.off, pad = { 1: 'pl-[23px]', 2: 'pl-[30px]' }[el.dataset.pad] || 'pl-[13px]';
  const pm = off ? 'bg-[#505050]' : 'bg-[#e0e0de] shadow-[0_-2px_0_#000]';
  const vb = off ? 'bg-[#505050]' : 'bg-[#e0e0de]';
  el.className += ' h-[68px] shrink-0 rounded-[10px] border-2 border-[#1b1b1b] flex items-stretch ' + (off ? 'bg-[#303030]' : 'bg-[#2d2d2d]');
  el.innerHTML = `<span class="flex-1 ${pad} leading-[61px]">${el.dataset.spin}</span>
    <span class="w-[34px] shrink-0 border-l-2 border-[#292929] flex items-center justify-center"><i class="w-[24px] h-[4px] ${pm}"></i></span>
    <span class="w-[33px] shrink-0 border-l-2 border-[#292929] grid place-items-center"><i class="col-start-1 row-start-1 w-[24px] h-[4px] ${pm}"></i><i class="col-start-1 row-start-1 w-[4px] h-[24px] ${vb}"></i></span>`;
});

/* icon bars; '|' marks a separator */
const bar = s => s.split(' ').map(n => n === '|'
  ? '<span class="w-[12px] flex justify-center"><i class="w-[2px] h-[68px] bg-[#303030]"></i></span>'
  : `<span class="w-[82px] flex justify-center pl-[1px]">${icon(n)}</span>`).join('');
$('cmdbar').innerHTML = bar('new open save print | import export | undo redo | copy cut paste | zoomsel zoomdraw zoompage zoomcenter | dup clone unclone | group ungroup | fill text layers xml css align | docprops prefs')
  + `<span class="flex-1"></span><span class="w-[98px] flex justify-center">${icon('snap')}</span>
  <span class="w-[70px] h-[68px] rounded-[10px] border-2 border-[#1b1b1b] border-b-black bg-linear-to-b from-[#353535] to-[#303030] flex items-center justify-center">${icon('tri-l', 'size-[24px]')}</span>`;
$('selbar').innerHTML = bar('selall sellayers desel seltouch | rotl rotr fliph flipv | top raise lower bottom |');
$('scalebar').innerHTML = 'scstroke sccorner scgrad scpat'.split(' ').map(n =>
  `<span class="w-[70px] h-[68px] rounded-[10px] border-2 border-[#1b1b1b] bg-linear-to-b from-[#1c4a82] to-[#243f63] flex items-center justify-center">${icon(n)}</span>`).join('');
$('toolbox').innerHTML = 't-select t-node t-shape | t-rect t-ell t-star t-cube t-spiral | t-pen t-pencil t-callig t-text | t-grad t-mesh t-drop t-bucket | t-tweak t-spray t-erase t-conn t-lpe | t-measure t-zoom t-pages'.split(' ').map(n => n === '|'
  ? '<span class="h-[6px] flex items-center"><i class="h-[2px] w-full bg-[#303030]"></i></span>'
  : n === 't-select'
  ? `<span class="h-[64px] py-[1px] px-[3px]"><i class="h-[62px] rounded-[10px] border-2 border-[#1b1b1b] bg-linear-to-b from-[#1c4a82] to-[#243f63] flex items-center justify-center">${icon(n)}</i></span>`
  : `<span class="h-[64px] flex items-center justify-center">${icon(n)}</span>`).join('');

/* rulers */
const U = 236.2, X0 = 355.5, Y0 = 588.5;
let h = '<rect x="102" y="300" width="2280" height="42" fill="#363636"/><rect x="356" y="300" width="1786" height="42" fill="#1e1e1e"/><rect x="102" y="300" width="2280" height="2" fill="#222"/>';
let v = '<rect x="58" y="342" width="44" height="1685" fill="#363636"/><rect x="58" y="588" width="44" height="1061" fill="#1e1e1e"/>';
for (let i = -11; i < 100; i++) {
  const x = X0 + i * U / 10, y = Y0 + i * U / 10, L = i % 10 === 0 ? 28 : i % 5 === 0 ? 14 : 8;
  if (x > 102 && x < 2380) h += `<rect x="${Math.round(x) - 1}" y="${342 - L}" width="2" height="${L}" fill="#eee"/>`;
  if (y > 342 && y < 2027) v += `<rect x="${102 - L - 2}" y="${Math.round(y) - 1}" width="${L + 2}" height="2" fill="#eee"/>`;
  if (i % 10 === 0) {
    if (x < 2380) h += `<text x="${x + 5}" y="322" font-size="20" fill="#eee">${i * 25}</text>`;
    if (y < 2027) v += `<text transform="translate(80.500 ${y + 6.5}) rotate(-90)" text-anchor="end" font-size="20" fill="#eee">${i * 25}</text>`;
  }
}
h += '<rect x="102" y="340" width="2280" height="2" fill="#eee"/><path d="M2210 333h20l-10 9z" fill="#eee"/>';
v += '<rect x="100" y="342" width="2" height="1685" fill="#eee"/><path d="M92 972v20l9-10z" fill="#eee"/>';
$('hruler').innerHTML = h; $('vruler').innerHTML = v;

/* laser-cut parts */
const circ = (x, y, r) => `<circle cx="${x}" cy="${y}" r="${r}"/>`;
const pol = (cx, cy, r, a) => [cx + r * Math.sin(a * Math.PI / 180), cy - r * Math.cos(a * Math.PI / 180)];
function slot(a, b, R, w) {           /* rounded slot along an arc turning clockwise from a to b */
  const dx = b[0] - a[0], dy = b[1] - a[1], d = Math.hypot(dx, dy), k = Math.sqrt(R * R - d * d / 4) / d;
  const cx = (a[0] + b[0]) / 2 - dy * k, cy = (a[1] + b[1]) / 2 + dx * k;
  const off = (p, s) => [(p[0] + (p[0] - cx) / R * s), (p[1] + (p[1] - cy) / R * s)].join(' ');
  return `<path d="M${off(a, w)}A${R + w} ${R + w} 0 0 1 ${off(b, w)}A${w} ${w} 0 0 1 ${off(b, -w)}A${R - w} ${R - w} 0 0 0 ${off(a, -w)}A${w} ${w} 0 0 1 ${off(a, w)}z"/>`;
}
let s = '';
/* iris blades: [outer start, outer end, inner point] */
[[[812.9, 788.1], [806.2, 978.6], [678.7, 878.2]], [[797.5, 983.4], [613.4, 1035.8], [670, 883.1]],
 [[604.7, 1028.5], [498.1, 870], [659.8, 875.8]], [[502.1, 860.8], [620, 711], [664.4, 867.1]]].forEach(([a, b, c]) =>
  s += `<path d="M${a}A162 162 0 0 1 ${b}A151 151 0 0 1 ${c}A151 151 0 0 0 ${a}z"/>`);
s += '<path d="M645.500 706.700A162 162 0 0 1 809.300 776A151 151 0 0 1 675.600 866.600A151 151 0 0 0 648.600 728.500Q642.500 719 645.500 706.700z"/>';
[[671, 714.4], [821.5, 827.8], [761.8, 1003.8], [574.6, 1000.9], [519, 824]].forEach(p => s += circ(...p, 5.6));
[[[794, 772.1], [707.2, 747.4]], [[804.2, 963], [801.1, 872.9]], [[627.7, 1030], [712.9, 998.4]], [[508.3, 881.6], [563.9, 953.4]], [[611.8, 724.6], [561.3, 799.7]]]
  .forEach(([a, b]) => s += slot(a, b, 152, 5.8));
/* wall panels */
for (let i = 0; i < 19; i++) s += `<path transform="translate(${878.2 + i * 56.7} 0)" d="M0 808.500h17.500v-11.500h18v11.500h18.200v157H35.500v11.500h-18v-11.500H0z"/>`;
/* slotted rings */
const ring = (cx, cy) => {
  let r = circ(cx, cy, 178.5);
  for (let i = 0; i < 19; i++) r += `<rect x="${cx - 9}" y="${cy - 174}" width="18" height="11.500" transform="rotate(${i * 360 / 19} ${cx} ${cy})"/>`;
  return r;
};
s += ring(669.7, 1241) + circ(669.7, 1241, 136) + ring(1822.5, 1187);
for (let i = 0; i < 5; i++) {
  s += circ(...pol(669.7, 1241, 151.800, i * 72), 5.6);
  s += slot(pol(669.7, 1241, 151.800, 18.6 + i * 72), pol(669.7, 1241, 151.800, 53.4 + i * 72), 151.800, 6);
}
[[0, 0], [-35.8, 0], [35.8, 0], [0, -32.4], [0, 32.4]].forEach(([x, y]) =>
  s += `<g transform="translate(${689.9 + x} ${1234.2 + y})"><circle r="5.500"/><path d="M-12.200 -10.800H12.200A16.200 16.200 0 1 1 -12.200 -10.800z"/></g>`);
/* notched rings */
const notched = (dx, dy, inner) => `<g transform="translate(${dx} ${dy}) scale(.33333)"><path d="M682 185A48 48 0 0 0 776 211A536 536 0 0 1 1117 642A48 48 0 0 0 1121 738A536 536 0 0 1 819 1195A48 48 0 0 0 728 1230A536 536 0 0 1 200 1083A48 48 0 0 0 139 1006A536 536 0 0 1 115 459A48 48 0 0 0 169 378A536 536 0 0 1 682 185z"/>`
  + [[426, 286], [942, 429], [132, 732], [966, 964], [465, 1151]].map(p => circ(...p, 17)).join('') + circ(586.5, 713, inner) + '</g>';
const n = notched(860, 970, 407.5) + notched(1245.5, 954, 268);
$('drawing').innerHTML = s + `<g stroke-width="3.450">${n}</g>`;
$('thumb').innerHTML = `<g stroke-width="6">${s}</g><g stroke-width="18">${n}</g>`;

/* palette colours, top row then bottom row */
const P = ('1a1a1a 333333 4d4d4d 666666 999999 b3b3b3 cccccc e6e6e6 ececec f2f2f2 f9f9f9 800000 ff0000 808000 ffff00 008000 00ff00 008080 00ffff 000080 0000ff 800080 ff00ff ' +
 '2b0000 550000 800000 aa0000 d40000 ff0000 ff2a2a ff5555 ff8080 ffaaaa ffd5d5 280b0b 501616 782121 a02c2c c83737 d35f5f de8787 e9afaf f4d7d7 241c1c 483737 6c5353 916f6f ac9393 c8b7b7 e3dbdb ' +
 '2b1100 552200 803300 aa4400 d45500 ff6600 ff7f2a ff9955 ffb380 ffccaa ffe6d5 28170b 502d16 784421 a05a2c c87137 d38d5f deaa87 e9c6af f4e3d7 241f1c 483e37 6c5d53 917c6f ac9d93 c8beb7 e3dedb 2b2200 554400 806600 aa8800 ' +
 'd4aa00 ffcc00 ffd42a ffdd55 ffe680 ffeeaa fff6d5 28220b 504416 786721 a0892c c8ab37 d3bc5f decd87 e9ddaf f4eed7 24221c 484537 6c6753 918a6f aca793 c8c4b7 e3e2db ' +
 '222b00 445500 668000 88aa00 aad400 ccff00 d4ff2a ddff55 e5ff80 eeffaa f6ffd5 22280b 445016 677821 89a02c abc837 bcd35f cdde87 dde9af eef4d7 22241c 454837 676c53 8a916f a7ac93 c4c8b7 e2e3db ' +
 '112b00 225500 338000 44aa00 55d400 66ff00 7fff2a 99ff55 b3ff80 ccffaa e5ffd5 17280b 2d5016 447821 5aa02c 71c837 8dd35f aade87 c6e9af e3f4d7 1c241c 374837 5d6c53 7c916f 9dac93 bec8b7 dee3db 002b00 005500 008000 00aa00').split(' ');
$('swatches').innerHTML = P.map(c => `<i class="mr-[2px] shadow-[inset_0_0_0_2px_#ffffff0d]" style="background-color:#${c}"></i>`).join('');
</script>
</body>
</html>
